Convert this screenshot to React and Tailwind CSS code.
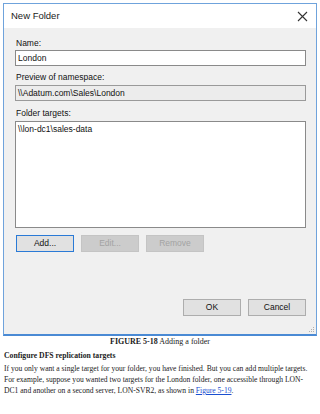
export default function App() {
  return (
    <div className="w-[320px] h-[414px] bg-white overflow-hidden">
      <div className="ml-[3px] mt-[3px] w-[314px] border border-[#6fa3dc] border-b-2 border-b-[#4a8ad4] flex flex-col">
        {/* title bar */}
        <div className="h-[24px] bg-white flex items-center justify-between pl-[7px] pr-[8px]">
          <span className="text-[9.5px] text-[#222]" style={{ fontFamily: '"Liberation Sans", Arial, sans-serif' }}>New Folder</span>
          <svg width="11" height="11" viewBox="0 0 11 11" className="text-[#333]">
            <path d="M1 1l9 9M10 1l-9 9" stroke="currentColor" strokeWidth="1.1" fill="none" />
          </svg>
        </div>

        {/* body */}
        <div
          className="relative bg-[#f0f0f0] h-[306px] pt-[10px] pl-[11px] pr-[10px] flex flex-col text-[8.5px] text-[#111]"
          style={{ fontFamily: '"Liberation Sans", Arial, sans-serif' }}
        >
          <div className="h-[11px] leading-[11px] pl-[1px]">Name:</div>
          <div className="mt-[1px] h-[16px] bg-white border border-[#8a8a8a] flex items-center px-[2px]">London</div>

          <div className="mt-[6px] h-[11px] leading-[11px] pl-[1px]">Preview of namespace:</div>
          <div className="mt-[2px] h-[16px] bg-[#ececec] border border-[#9a9a9a] flex items-center px-[2px]">\\Adatum.com\Sales\London</div>

          <div className="mt-[7px] h-[11px] leading-[11px] pl-[1px]">Folder targets:</div>
          <div className="mt-[2px] h-[107px] bg-white border border-[#8a8a8a] px-[2px] pt-[2px] leading-[11px]">\\lon-dc1\sales-data</div>

          <div className="mt-[7px] flex gap-[7px] pl-[1px]">
            <div className="w-[58px] h-[17px] bg-[#e1e1e1] border border-[#2a7ad6] flex items-center justify-center">Add...</div>
            <div className="w-[58px] h-[17px] bg-[#cccccc] border border-[#c4c4c4] text-[#a3a3a3] flex items-center justify-center">Edit...</div>
            <div className="w-[58px] h-[17px] bg-[#cccccc] border border-[#c4c4c4] text-[#a3a3a3] flex items-center justify-center">Remove</div>
          </div>

          <div className="mt-[47px] flex justify-end gap-[7px]">
            <div className="w-[58px] h-[17px] bg-[#e1e1e1] border border-[#adadad] flex items-center justify-center">OK</div>
            <div className="w-[58px] h-[17px] bg-[#e1e1e1] border border-[#adadad] flex items-center justify-center">Cancel</div>
          </div>

          <svg width="6" height="6" viewBox="0 0 6 6" className="absolute right-[1px] bottom-[1px]">
            <rect x="4" y="0" width="1" height="1" fill="#b0b0b0" />
            <rect x="2" y="2" width="1" height="1" fill="#b0b0b0" />
            <rect x="4" y="2" width="1" height="1" fill="#b0b0b0" />
            <rect x="0" y="4" width="1" height="1" fill="#b0b0b0" />
            <rect x="2" y="4" width="1" height="1" fill="#b0b0b0" />
            <rect x="4" y="4" width="1" height="1" fill="#b0b0b0" />
          </svg>
        </div>
      </div>

      {/* book text */}
      <div className="leading-[11px] text-[#222]" style={{ fontFamily: '"Liberation Serif", "Times New Roman", serif' }}>
        <div className="text-[8px] text-center"><b>FIGURE 5-18</b> Adding a folder</div>
        <div className="mt-[3px] pl-[4px] text-[7.7px] font-bold">Configure DFS replication targets</div>
        <div className="mt-[2px] pl-[4px] text-[7.6px] whitespace-nowrap">
          <div>If you only want a single target for your folder, you have finished. But you can add multiple targets.</div>
          <div>For example, suppose you wanted two targets for the London folder, one accessible through LON-</div>
          <div>DC1 and another on a second server, LON-SVR2, as shown in <span className="text-[#1a4fd0] underline">Figure 5-19</span>.</div>
        </div>
      </div>
    </div>
  )
}
